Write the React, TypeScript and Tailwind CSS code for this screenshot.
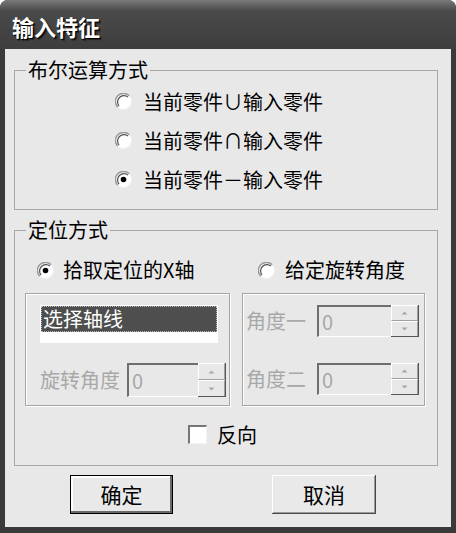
function Radio({ checked }: { checked?: boolean }) {
  return (
    <svg width="17" height="17" viewBox="0 0 17 17" className="shrink-0">
      <circle cx="8.5" cy="8.5" r="8" fill="#ffffff" />
      <path d="M14.2 2.8 A8 8 0 0 0 2.8 14.2" fill="none" stroke="#9a9a9a" strokeWidth="1.5" />
      <path d="M13 4 A6.4 6.4 0 0 0 4 13" fill="none" stroke="#505050" strokeWidth="1.2" />
      <path d="M2.8 14.2 A8 8 0 0 0 14.2 2.8" fill="none" stroke="#f0f0f0" strokeWidth="1.2" />
      {checked && <circle cx="8.5" cy="8.5" r="2.8" fill="#000000" />}
    </svg>
  )
}

function Spinner({ h }: { h: string }) {
  return (
    <div className={`flex flex-col w-[28px] ${h} border-r border-b border-[#555555]`}>
      <div className="flex-1 flex items-center justify-center bg-[#e8e8e8] border-t border-l border-white border-b border-b-[#a0a0a0] border-r border-r-[#a0a0a0]">
        <svg width="7" height="4" viewBox="0 0 7 4">
          <path d="M0.5 3.5 L3.5 0.5 L6.5 3.5 Z" fill="#a8a8a8" />
        </svg>
      </div>
      <div className="flex-1 flex items-center justify-center bg-[#e8e8e8] border-t border-l border-white border-r border-r-[#a0a0a0]">
        <svg width="7" height="4" viewBox="0 0 7 4">
          <path d="M0.5 0.5 L3.5 3.5 L6.5 0.5 Z" fill="#a8a8a8" />
        </svg>
      </div>
    </div>
  )
}

function NumberField({ w, h }: { w: string; h: string }) {
  return (
    <div className="flex">
      <div className={`${w} ${h} flex items-center bg-[#e8e8e8] border-t-2 border-l-2 border-[#6e6e6e] border-b border-b-white pl-[3px] text-[20px] leading-none text-[#a8a8a8]`}>
        0
      </div>
      <Spinner h={h} />
    </div>
  )
}

export default function App() {
  return (
    <div className="w-[456px] h-[533px] bg-white font-['Noto_Sans_CJK_SC','Noto_Sans',sans-serif]">
      <div className="w-[456px] h-[533px] flex flex-col rounded-t-[8px] overflow-hidden bg-[#3a3a3a]">
        {/* title bar */}
        <div className="h-[49px] shrink-0 flex items-center pl-[12px] pt-[3px] bg-linear-to-b from-[#7a7a7a] via-[#4a4a4a] via-[22%] to-[#3e3e3e]">
          <span className="text-[22px] leading-none font-bold text-white [text-shadow:1px_1px_0_#000000,2px_2px_1px_#222222]">
            输入特征
          </span>
        </div>

        {/* body */}
        <div className="mx-[5px] h-[478px] bg-[#e8e8e8] pt-[11px] text-black">
          <fieldset className="ml-[9px] w-[424px] h-[150px] border border-[#a6a6a6]">
            <legend className="ml-[11px] px-[2px] text-[20px] leading-[20px]">布尔运算方式</legend>
            <div className="pt-[2px] pl-[100px]">
              {[
                { label: "当前零件∪输入零件", checked: false },
                { label: "当前零件∩输入零件", checked: false },
                { label: "当前零件－输入零件", checked: true },
              ].map((r) => (
                <div key={r.label} className="h-[39px] flex items-center gap-[11px]">
                  <Radio checked={r.checked} />
                  <span className="text-[20px] leading-none">{r.label}</span>
                </div>
              ))}
            </div>
          </fieldset>

          <fieldset className="mt-[10px] ml-[9px] w-[424px] h-[246px] border border-[#a6a6a6]">
            <legend className="ml-[11px] px-[2px] text-[20px] leading-[20px]">定位方式</legend>

            <div className="pt-[15px] h-[45px] flex items-center">
              <div className="ml-[22px] w-[221px] flex items-center gap-[9px]">
                <Radio checked />
                <span className="text-[20px] leading-none">拾取定位的X轴</span>
              </div>
              <div className="flex items-center gap-[10px]">
                <Radio />
                <span className="text-[20px] leading-none">给定旋转角度</span>
              </div>
            </div>

            <div className="mt-[8px] flex">
              <div className="ml-[10px] w-[205px] h-[113px] border border-[#a6a6a6] shadow-[inset_1px_1px_0_#ffffff,1px_1px_0_#ffffff] pl-[14px] pt-[11px]">
                <div className="w-[178px] h-[38px] bg-white p-[1px]">
                  <div className="h-[26px] bg-[#4e4e4e] outline-1 outline-dotted outline-[#bdbdbd] -outline-offset-1 flex items-center pl-[2px]">
                    <span className="text-[20px] leading-none text-white">选择轴线</span>
                  </div>
                </div>
                <div className="mt-[20px] flex items-center">
                  <span className="w-[80px] text-[20px] leading-none text-[#a8a8a8]">旋转角度</span>
                  <div className="ml-[7px]">
                    <NumberField w="w-[71px]" h="h-[34px]" />
                  </div>
                </div>
              </div>

              <div className="ml-[12px] w-[183px] h-[113px] border border-[#a6a6a6] shadow-[inset_1px_1px_0_#ffffff,1px_1px_0_#ffffff] pl-[3px] pt-[11px] flex flex-col gap-[26px]">
                <div className="flex items-center">
                  <span className="w-[60px] text-[20px] leading-none text-[#a8a8a8]">角度一</span>
                  <div className="ml-[11px]">
                    <NumberField w="w-[74px]" h="h-[32px]" />
                  </div>
                </div>
                <div className="flex items-center">
                  <span className="w-[60px] text-[20px] leading-none text-[#a8a8a8]">角度二</span>
                  <div className="ml-[11px]">
                    <NumberField w="w-[74px]" h="h-[32px]" />
                  </div>
                </div>
              </div>
            </div>

            <div className="mt-[19px] ml-[173px] h-[19px] flex items-center gap-[10px]">
              <div className="w-[19px] h-[19px] bg-white border-t-2 border-l-2 border-[#767676] border-b border-r border-b-[#f4f4f4] border-r-[#f4f4f4]" />
              <span className="text-[20px] leading-none">反向</span>
            </div>
          </fieldset>

          <div className="mt-[9px] pl-[65px] flex gap-[99px]">
            <button className="w-[103px] h-[39px] border border-black bg-[#e9e9e9] shadow-[inset_-2px_-2px_0_#6a6a6a,inset_2px_2px_0_#ffffff] text-[21px] leading-none text-black">
              确定
            </button>
            <button className="w-[104px] h-[39px] bg-[#e9e9e9] shadow-[inset_-1px_-1px_0_#4a4a4a,inset_1px_1px_0_#ffffff,inset_-2px_-2px_0_#9a9a9a] text-[21px] leading-none text-black">
              取消
            </button>
          </div>
        </div>
      </div>
    </div>
  )
}
